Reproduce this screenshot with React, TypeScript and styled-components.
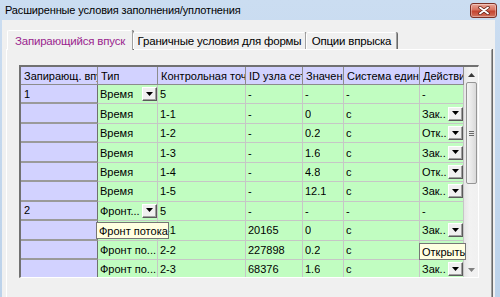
import styled, { createGlobalStyle } from "styled-components";

const GlobalStyle = createGlobalStyle`
  html, body {
    margin: 0;
    padding: 0;
    overflow: hidden;
  }
  body {
    font-family: "Liberation Sans", Arial, sans-serif;
    background: #fff;
  }
`;

const Window = styled.div`
  width: 500px;
  height: 297px;
  display: flex;
  flex-direction: column;
  overflow: hidden;
  background: linear-gradient(180deg, #cbddf1 0%, #bcd2ea 100%);
`;

const TitleBar = styled.div`
  height: 20px;
  flex: none;
  display: flex;
  align-items: center;
  justify-content: space-between;
  padding: 0 3px 0 5px;
`;

const Title = styled.span`
  font-size: 11px;
  letter-spacing: -0.15px;
  color: #000;
  white-space: nowrap;
`;

const CloseButton = styled.div`
  width: 27px;
  height: 15px;
  box-sizing: border-box;
  margin-top: 1px;
  border: 1px solid #7c3026;
  border-radius: 3px;
  background: linear-gradient(180deg, #eaa698 0%, #d8725f 45%, #c4432f 55%, #d2735e 100%);
  box-shadow: inset 0 0 0 1px rgba(255, 255, 255, 0.35);
  display: flex;
  align-items: center;
  justify-content: center;
`;

const Body = styled.div`
  flex: 1;
  min-height: 0;
  margin: 0 5px 0 2px;
  padding: 10px 3px 0 4px;
  background: #f0f0f0;
  display: flex;
  flex-direction: column;
`;

const TabStrip = styled.div`
  height: 19px;
  flex: none;
  display: flex;
  align-items: flex-end;
  padding-left: 1px;
  position: relative;
  z-index: 1;
`;

const Tab = styled.div<{ $active?: boolean; $w: number }>`
  box-sizing: border-box;
  width: ${(p) => p.$w}px;
  height: ${(p) => (p.$active ? 20 : 17)}px;
  margin-bottom: ${(p) => (p.$active ? -1 : 0)}px;
  display: flex;
  align-items: center;
  justify-content: center;
  font-size: 11.5px;
  letter-spacing: -0.2px;
  color: ${(p) => (p.$active ? "#9a1f8e" : "#000")};
  background: #f0f0f0;
  border-top: 1px solid #fff;
  border-left: 1px solid #fff;
  border-right: 1px solid #a0a0a0;
  box-shadow: 1px 0 0 #696969;
  border-radius: 2px 2px 0 0;
  white-space: nowrap;
`;

const Panel = styled.div`
  flex: 1;
  min-height: 0;
  border-top: 1px solid #fff;
  border-left: 1px solid #fff;
  border-right: 1px solid #a0a0a0;
  box-shadow: 1px 0 0 #696969;
  padding: 15px 12px 0 12px;
`;

const GridFrame = styled.div`
  position: relative;
  width: 460px;
  height: 213px;
  box-sizing: border-box;
  border-top: 2px solid #717171;
  border-left: 2px solid #717171;
  border-right: 1px solid #fff;
  border-bottom: 1px solid #fff;
  display: flex;
  background: #fff;
`;

const Table = styled.div`
  width: 443px;
  height: 210px;
  overflow: hidden;
  display: grid;
  grid-template-columns: 77px 60px 88px 57px 41px 76px 44px;
  grid-template-rows: 18px;
  grid-auto-rows: 19.45px;
  align-content: start;
`;

type Kind = "head" | "fixed" | "data";

const Cell = styled.div<{ $kind: Kind }>`
  box-sizing: border-box;
  min-width: 0;
  display: flex;
  align-items: center;
  justify-content: space-between;
  padding-left: ${(p) => (p.$kind === "data" ? 2 : 3)}px;
  font-size: 11px;
  color: #000;
  white-space: nowrap;
  overflow: hidden;
  background: ${(p) => (p.$kind === "data" ? "#c1fdc1" : "#d2d2ff")};
  border-right: 1px solid
    ${(p) => (p.$kind === "data" ? "#c6c6c6" : p.$kind === "head" ? "#8c8c8c" : "#6f6f6f")};
  border-bottom: ${(p) =>
    p.$kind === "data" ? "1px solid #c6c6c6" : p.$kind === "head" ? "1px solid #8c8c8c" : "2px solid #9a9a9a"};
`;

const CellText = styled.span`
  overflow: hidden;
  min-width: 0;
`;

const DropButton = styled.div`
  flex: none;
  width: 15px;
  height: 14px;
  box-sizing: border-box;
  margin-left: 2px;
  background: #f0f0f0;
  border-top: 1px solid #fff;
  border-left: 1px solid #fff;
  border-right: 1px solid #5a5a5a;
  border-bottom: 1px solid #5a5a5a;
  box-shadow: inset -1px -1px 0 #a0a0a0;
  display: flex;
  align-items: center;
  justify-content: center;
  padding-bottom: 1px;
`;

const ScrollBar = styled.div`
  width: 14px;
  flex: none;
  display: flex;
  flex-direction: column;
  align-items: center;
  background: linear-gradient(90deg, #e6e6e6 0%, #f2f2f2 40%, #f0f0f0 100%);
`;

const ScrollArrow = styled.div`
  height: 15px;
  width: 100%;
  flex: none;
  display: flex;
  align-items: center;
  justify-content: center;
`;

const Thumb = styled.div`
  width: 11px;
  height: 102px;
  box-sizing: border-box;
  border: 1px solid #959595;
  border-radius: 2px;
  background: linear-gradient(90deg, #f4f4f4 0%, #e8e8e8 50%, #d9d9d9 100%);
  display: flex;
  align-items: center;
  justify-content: center;
`;

const Spacer = styled.div`
  flex: 1;
`;

const Tooltip = styled.div<{ $x: number; $y: number; $w: number }>`
  position: absolute;
  left: ${(p) => p.$x}px;
  top: ${(p) => p.$y}px;
  width: ${(p) => p.$w}px;
  height: 17px;
  box-sizing: border-box;
  padding-left: 2px;
  border: 1px solid #767676;
  background: #ffffe1;
  font-size: 11px;
  color: #000;
  display: flex;
  align-items: center;
  white-space: nowrap;
  z-index: 2;
`;

const Arrow = ({ color = "#000" }: { color?: string }) => (
  <svg width="7" height="4" viewBox="0 0 7 4">
    <path d="M0 0h7L3.5 4z" fill={color} />
  </svg>
);

const UpArrow = () => (
  <svg width="7" height="4" viewBox="0 0 7 4">
    <path d="M0 4h7L3.5 0z" fill="#3a3a3a" />
  </svg>
);

const Grip = () => (
  <svg width="5" height="5" viewBox="0 0 5 5">
    <path d="M0 0.5h5M0 2.5h5M0 4.5h5" stroke="#6a6a6a" strokeWidth="1" />
  </svg>
);

const CloseGlyph = () => (
  <svg width="12" height="9" viewBox="0 0 12 9">
    <path d="M2 1.5l8 6M10 1.5l-8 6" stroke="#5c1a10" strokeWidth="3.4" strokeLinecap="round" />
    <path d="M2 1.5l8 6M10 1.5l-8 6" stroke="#fff" strokeWidth="1.9" strokeLinecap="round" />
  </svg>
);

const headers = [
  "Запирающ. впуск",
  "Тип",
  "Контрольная точка",
  "ID узла сетки",
  "Значение",
  "Система единиц",
  "Действие",
];

type Row = { cells: string[]; typeBtn?: boolean; actBtn?: boolean };

const rows: Row[] = [
  { cells: ["1", "Время", "5", "-", "-", "-", "-"], typeBtn: true },
  { cells: ["", "Время", "1-1", "-", "0", "с", "Зак..."], actBtn: true },
  { cells: ["", "Время", "1-2", "-", "0.2", "с", "Отк..."], actBtn: true },
  { cells: ["", "Время", "1-3", "-", "1.6", "с", "Зак..."], actBtn: true },
  { cells: ["", "Время", "1-4", "-", "4.8", "с", "Отк..."], actBtn: true },
  { cells: ["", "Время", "1-5", "-", "12.1", "с", "Зак..."], actBtn: true },
  { cells: ["2", "Фронт...", "5", "-", "-", "-", "-"], typeBtn: true },
  { cells: ["", "Фронт по...", "2-1", "20165", "0", "с", "Зак..."], actBtn: true },
  { cells: ["", "Фронт по...", "2-2", "227898", "0.2", "с", "Отк..."], actBtn: true },
  { cells: ["", "Фронт по...", "2-3", "68376", "1.6", "с", "Зак..."], actBtn: true },
];

const tabs = [
  { label: "Запирающийся впуск", w: 126, active: true },
  { label: "Граничные условия для формы", w: 173 },
  { label: "Опции впрыска", w: 91 },
];

export default function App() {
  return (
    <>
      <GlobalStyle />
      <Window>
        <TitleBar>
          <Title>Расширенные условия заполнения/уплотнения</Title>
          <CloseButton>
            <CloseGlyph />
          </CloseButton>
        </TitleBar>
        <Body>
          <TabStrip>
            {tabs.map((t) => (
              <Tab key={t.label} $active={t.active} $w={t.w}>
                {t.label}
              </Tab>
            ))}
          </TabStrip>
          <Panel>
            <GridFrame>
              <Table>
                {headers.map((h) => (
                  <Cell key={h} $kind="head">
                    <CellText>{h}</CellText>
                  </Cell>
                ))}
                {rows.map((r, ri) =>
                  r.cells.map((c, ci) => (
                    <Cell key={`${ri}-${ci}`} $kind={ci === 0 ? "fixed" : "data"}>
                      <CellText>{c}</CellText>
                      {((ci === 1 && r.typeBtn) || (ci === 6 && r.actBtn)) && (
                        <DropButton>
                          <Arrow />
                        </DropButton>
                      )}
                    </Cell>
                  ))
                )}
              </Table>
              <ScrollBar>
                <ScrollArrow>
                  <UpArrow />
                </ScrollArrow>
                <Thumb>
                  <Grip />
                </Thumb>
                <Spacer />
                <ScrollArrow>
                  <Arrow color="#808080" />
                </ScrollArrow>
              </ScrollBar>
              <Tooltip $x={75} $y={155} $w={73}>
                Фронт потока
              </Tooltip>
              <Tooltip $x={398} $y={176} $w={47}>
                Открыть
              </Tooltip>
            </GridFrame>
          </Panel>
        </Body>
      </Window>
    </>
  );
}
